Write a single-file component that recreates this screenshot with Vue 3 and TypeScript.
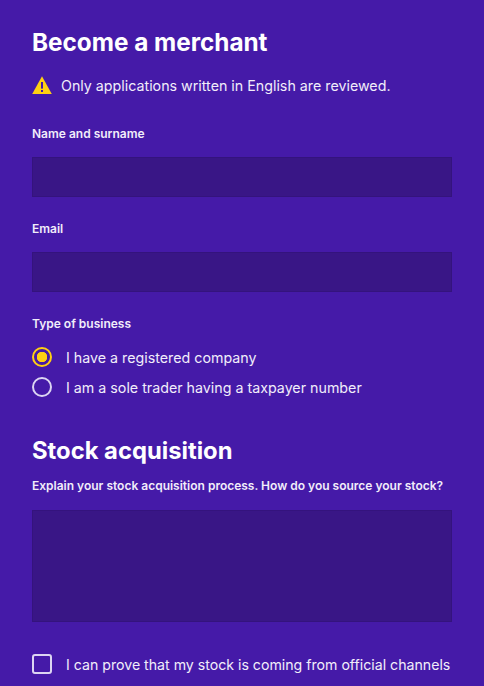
<script setup lang="ts">
import { ref } from 'vue'

const businessTypes = [
  { id: 'company', label: 'I have a registered company' },
  { id: 'sole', label: 'I am a sole trader having a taxpayer number' }
]

const businessType = ref('company')
const officialChannels = ref(false)
</script>

<template>
  <form class="merchant-form" @submit.prevent>
    <h1 class="form-title">Become a merchant</h1>
    <div class="notice">
      <svg class="notice-icon" viewBox="0 0 20 18" width="20" height="18">
        <path d="M10 0.3 L19.8 18 L0.2 18 Z" fill="#ffd012" />
        <rect x="9" y="6" width="2" height="6.6" fill="#451aa8" />
        <rect x="9" y="14" width="2" height="2" fill="#451aa8" />
      </svg>
      <span>Only applications written in English are reviewed.</span>
    </div>

    <label class="field-label" for="name">Name and surname</label>
    <input id="name" class="text-input" type="text" />

    <label class="field-label field-gap" for="email">Email</label>
    <input id="email" class="text-input" type="text" />

    <div class="field-label field-gap">Type of business</div>
    <div class="radio-list">
      <label v-for="item in businessTypes" :key="item.id" class="choice" @click="businessType = item.id">
        <span class="radio" :class="{ checked: businessType === item.id }"></span>
        <span>{{ item.label }}</span>
      </label>
    </div>

    <h2 class="form-title section-title">Stock acquisition</h2>
    <label class="field-label process-label" for="process">Explain your stock acquisition process. How do you source your stock?</label>
    <textarea id="process" class="text-input text-area"></textarea>

    <label class="choice check-row" @click="officialChannels = !officialChannels">
      <span class="checkbox" :class="{ checked: officialChannels }"></span>
      <span>I can prove that my stock is coming from official channels</span>
    </label>
  </form>
</template>

<style>
html,
body {
  background: #451aa8;
}
</style>

<style scoped>
.merchant-form {
  box-sizing: border-box;
  width: 484px;
  height: 686px;
  overflow: hidden;
  padding: 27px 32px 0;
  background: #451aa8;
  color: #f1edfa;
  font-family: Inter, "Liberation Sans", sans-serif;
  display: flex;
  flex-direction: column;
}

.form-title {
  margin: 0;
  font-size: 24.3px;
  line-height: 30px;
  font-weight: 700;
  color: #fff;
}

.notice {
  display: flex;
  align-items: center;
  gap: 9px;
  margin-top: 18px;
  height: 20px;
  font-size: 14.25px;
  white-space: nowrap;
}

.notice-icon {
  flex-shrink: 0;
}

.field-label {
  display: block;
  margin-top: 30px;
  font-size: 12px;
  line-height: 18px;
  font-weight: 600;
  white-space: nowrap;
}

.field-gap {
  margin-top: 23px;
}

.text-input {
  box-sizing: border-box;
  display: block;
  width: 420px;
  height: 40px;
  margin-top: 14px;
  padding: 0 12px;
  background: #391686;
  border: 1px solid #34137d;
  border-radius: 0;
  outline: none;
  color: #fff;
}

.text-area {
  height: 112px;
  margin-top: 15px;
  resize: none;
}

.radio-list {
  display: flex;
  flex-direction: column;
  gap: 10px;
  margin-top: 14px;
}

.choice {
  display: flex;
  align-items: center;
  gap: 14px;
  height: 20px;
  font-size: 14.25px;
  white-space: nowrap;
}

.radio,
.checkbox {
  box-sizing: border-box;
  flex-shrink: 0;
  width: 20px;
  height: 20px;
  border: 2px solid #dcd5f2;
}

.radio {
  border-radius: 50%;
}

.radio.checked {
  border-color: #ffd012;
  background: radial-gradient(circle, #ffd012 0 5px, transparent 5.5px);
}

.checkbox {
  border-radius: 3px;
}

.checkbox.checked {
  background: #ffd012;
  border-color: #ffd012;
}

.section-title {
  margin-top: 39px;
  font-size: 23.8px;
}

.process-label {
  margin-top: 11px;
}

.check-row {
  margin-top: 32px;
  font-size: 14.15px;
}
</style>
